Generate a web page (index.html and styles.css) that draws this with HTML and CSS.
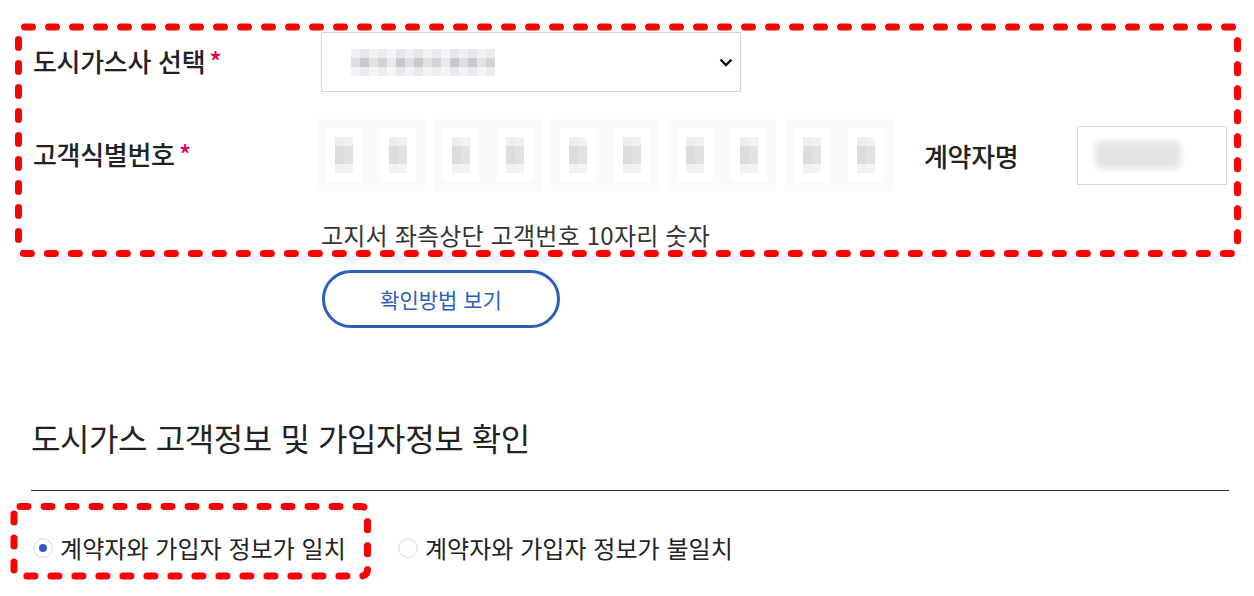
FILE: index.html
```html
<!DOCTYPE html>
<html lang="ko">
<head>
    <meta charset="UTF-8">
    <meta name="viewport" content="width=device-width, initial-scale=1.0">
    <title>도시가스 고객정보 확인</title>
    <link rel="stylesheet" href="styles.css">
</head>
<body>
<div class="page">

    <div class="form">
        <div class="row row-company">
            <span class="label">도시가스사 선택<em>*</em></span>
            <div class="select">
                <span class="mosaic-text"></span>
                <svg class="chevron" width="14" height="9" viewBox="0 0 14 9"><path d="M1.5 1.5 L7 7 L12.5 1.5" fill="none" stroke="#111" stroke-width="2.4"/></svg>
            </div>
        </div>

        <div class="row row-number">
            <span class="label">고객식별번호<em>*</em></span>
            <div class="digits">
                <div class="pair"><span class="digit"><i></i></span><span class="digit"><i></i></span></div>
                <div class="pair"><span class="digit"><i></i></span><span class="digit"><i></i></span></div>
                <div class="pair"><span class="digit"><i></i></span><span class="digit"><i></i></span></div>
                <div class="pair"><span class="digit"><i></i></span><span class="digit"><i></i></span></div>
                <div class="pair"><span class="digit"><i></i></span><span class="digit"><i></i></span></div>
            </div>
            <span class="label-name">계약자명</span>
            <div class="name-box"><span class="name-blur"></span></div>
        </div>

        <p class="hint">고지서 좌측상단 고객번호 10자리 숫자</p>
        <button class="btn-outline">확인방법 보기</button>
    </div>

    <div class="section">
        <h2 class="section-title">도시가스 고객정보 및 가입자정보 확인</h2>
        <div class="radios">
            <label class="radio checked"><span class="dot"></span>계약자와 가입자 정보가 일치</label>
            <label class="radio"><span class="dot"></span>계약자와 가입자 정보가 불일치</label>
        </div>
    </div>

    <!-- annotation marks -->
    <svg class="marks" width="1254" height="596" viewBox="0 0 1254 596">
        <rect x="18.5" y="27" width="1219" height="226.5" rx="6"/>
        <rect x="14" y="506.5" width="353.5" height="69.5" rx="6"/>
    </svg>
</div>
</body>
</html>
```

FILE: styles.css
```css
body {
    margin: 0;
    background: #fff;
    color: #222;
    font-family: "Noto Sans CJK KR", "Noto Sans", sans-serif;
}
.page {
    position: relative;
    width: 1254px;
    height: 596px;
    overflow: hidden;
}
.form {
    padding: 32px 0 0 33px;
}
.row {
    display: flex;
    align-items: center;
}
.label {
    width: 288px;
    flex: none;
    font-size: 26px;
    font-weight: 500;
    letter-spacing: -0.3px;
    margin-top: -3px;
}
.label em {
    font-style: normal;
    font-size: 26px;
    color: #e3005c;
    margin-left: 4px;
}
.select {
    box-sizing: border-box;
    width: 420px;
    height: 60px;
    border: 1px solid #d6d6d6;
    display: flex;
    align-items: center;
    justify-content: space-between;
    padding: 0 7px 0 29px;
}
.mosaic-text {
    display: block;
    width: 144px;
    height: 27px;
    background:
        linear-gradient(rgba(255,255,255,0.55) 0 9px, rgba(255,255,255,0) 9px 18px, rgba(255,255,255,0.6) 18px),
        repeating-linear-gradient(90deg, #dedfe4 0 9px, #c9cad0 9px 18px, #e4e3df 18px 27px, #d2d3d6 27px 36px, #e9e8ea 36px 45px, #c8c7cc 45px 54px);
}
.chevron {
    display: block;
}
.row-number {
    margin-top: 27px;
}
.digits {
    display: flex;
    gap: 9px;
    margin-left: -4px;
}
.pair {
    display: flex;
}
.digit {
    width: 54px;
    height: 72px;
    box-sizing: border-box;
    border: 9px solid #fafafa;
    background: #fff;
    display: flex;
    align-items: center;
    justify-content: center;
}
.digit i {
    display: block;
    width: 18px;
    height: 36px;
    background:
        linear-gradient(rgba(255,255,255,0.5) 0 9px, rgba(255,255,255,0) 9px 27px, rgba(255,255,255,0.6) 27px),
        linear-gradient(90deg, #dcdcdc 0 9px, #e2e2e6 9px);
}
.label-name {
    margin-left: 31px;
    width: 153px;
    font-size: 26px;
    font-weight: 500;
    letter-spacing: -0.3px;
}
.name-box {
    width: 150px;
    height: 59px;
    box-sizing: border-box;
    border: 1px solid #dadada;
    display: flex;
    align-items: center;
    padding-left: 17px;
}
.name-blur {
    display: block;
    width: 86px;
    height: 28px;
    border-radius: 6px;
    background: #e4e4e4;
    filter: blur(3px);
}
.hint {
    margin: 29px 0 0 288px;
    font-size: 24px;
    line-height: 30px;
    color: #333;
    letter-spacing: 0.2px;
}
.btn-outline {
    margin: 20px 0 0 289px;
    width: 238px;
    height: 58px;
    border: 3px solid #2c5fbd;
    border-radius: 29px;
    background: #fff;
    color: #2c5fbd;
    font-family: inherit;
    font-size: 21px;
    cursor: pointer;
}
.section {
    margin: 89px 25px 0 31px;
}
.section-title {
    margin: 0;
    font-size: 32px;
    line-height: 40px;
    font-weight: 400;
    color: #222;
    padding-bottom: 33px;
    border-bottom: 1px solid #333;
    letter-spacing: -0.4px;
}
.radios {
    display: flex;
    gap: 52px;
    margin: 42px 0 0 2px;
}
.radio {
    display: flex;
    align-items: center;
    font-size: 24px;
    line-height: 30px;
    letter-spacing: 0.05px;
    color: #222;
    cursor: pointer;
}
.dot {
    width: 20px;
    height: 20px;
    margin-right: 7px;
    border-radius: 50%;
    border: 1px solid #dcdcdc;
    box-shadow: inset 0 1px 2px rgba(0,0,0,0.07);
    box-sizing: border-box;
    position: relative;
}
.radio.checked .dot::after {
    content: "";
    position: absolute;
    left: 5px;
    top: 5px;
    width: 8px;
    height: 8px;
    border-radius: 50%;
    background: #2c5fbd;
}
.marks {
    position: absolute;
    left: 0;
    top: 0;
    pointer-events: none;
}
.marks rect {
    fill: none;
    stroke: #ff0000;
    stroke-width: 7;
    stroke-dasharray: 8 16;
    stroke-linecap: round;
}
```
